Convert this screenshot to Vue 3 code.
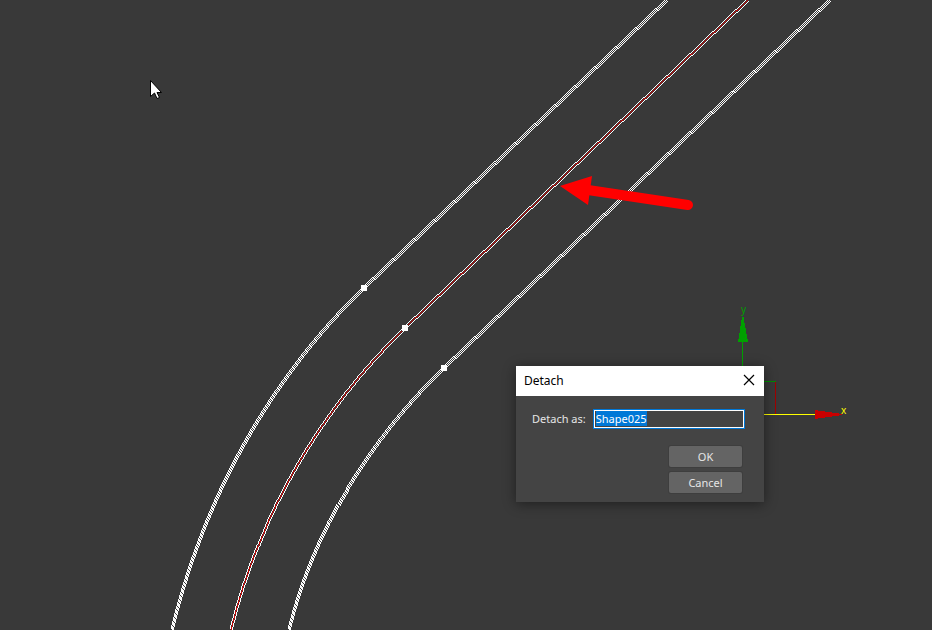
<script setup>
import { onMounted, ref } from 'vue'

const name = ref('Shape025')
const nameInput = ref(null)
const open = ref(true)

const splines = [
  { id: 'left', core: 'white', x: 364, y: 288, d: 'M667 0L364 288C268 380 203 501 172 630' },
  { id: 'center', core: 'red', x: 405, y: 328, d: 'M748 0L405 328C320 410 259 515 231 630' },
  { id: 'right', core: 'white', x: 444, y: 368, d: 'M830 0L444 368C370 439 313 531 289 630' },
]

onMounted(() => {
  nameInput.value.focus()
  nameInput.value.select()
})
</script>

<template>
  <main class="viewport">
    <svg class="scene" aria-hidden="true">
      <g class="splines">
        <g v-for="s in splines" :key="s.id">
          <path :d="s.d" :class="s.core" />
          <path :d="s.d" class="white" transform="translate(-1 -1)" />
          <path :d="s.d" class="white" transform="translate(1 1)" />
          <rect :x="s.x - 3" :y="s.y - 3" width="6" height="6" class="vertex" />
        </g>
      </g>
      <g shape-rendering="crispEdges">
        <path d="M742.5 341V414" stroke="#00a000" />
        <path d="M742 317H743.500L748 342H738Z" fill="#00a000" />
        <path d="M743 381.500H776" stroke="#008c00" />
        <path d="M775.500 382V414" stroke="#a00000" />
        <path d="M742 414.500H816" stroke="#ffff00" />
        <path d="M815 410L842 414V415L815 419Z" fill="#c80000" />
      </g>
      <text x="741" y="313" class="axis" fill="#00a000">y</text>
      <text x="841" y="414" class="axis" fill="#ffff00">x</text>
      <path d="M588 190L688 205" stroke="#ff0000" stroke-width="10" stroke-linecap="round" />
      <path d="M560 186L592 176L588 205Z" fill="#ff0000" />
      <path
        d="M150.500 80.500V96.500L154.500 93L157 98.500L159.500 97.500L157 92.500H161.500Z"
        fill="#fff"
        stroke="#000"
      />
    </svg>

    <form v-if="open" class="dialog" role="dialog" aria-labelledby="title" @submit.prevent="open = false">
      <header class="titlebar">
        <h1 id="title">Detach</h1>
        <button type="button" class="close" aria-label="Close" @click="open = false">
          <svg width="12" height="12" viewBox="0 0 12 12">
            <path d="M1 1L11 11M11 1L1 11" stroke="#000" stroke-width="1.200" />
          </svg>
        </button>
      </header>
      <div class="body">
        <div class="field">
          <label for="shape-name">Detach as:</label>
          <input id="shape-name" ref="nameInput" v-model="name" type="text" spellcheck="false" autocomplete="off" />
        </div>
        <div class="actions">
          <button type="submit">OK</button>
          <button type="button" @click="open = false">Cancel</button>
        </div>
      </div>
    </form>
  </main>
</template>

<style>
body {
  margin: 0;
  background: #393939;
}
</style>

<style scoped>
.viewport {
  position: relative;
  height: 100vh;
  overflow: hidden;
  background: #393939;
  font-family: "Noto Sans", "Open Sans", sans-serif;
  font-size: 11px;
}

.scene {
  display: block;
  width: 100%;
  height: 100%;
}

/* A stroke just under one pixel is drawn as a hairline, so the three strands stay apart. */
.splines {
  fill: none;
  stroke-width: 0.99;
  shape-rendering: crispEdges;
}

.white {
  stroke: #fff;
}

.red {
  stroke: #d00000;
}

.vertex {
  fill: #fff;
}

.axis {
  font-size: 10px;
}

.dialog {
  position: absolute;
  left: 516px;
  top: 366px;
  width: 248px;
  background: #444;
  color: #e6e6e6;
  box-shadow: 0 2px 12px rgba(0, 0, 0, 0.45);
}

.titlebar {
  display: flex;
  align-items: center;
  justify-content: space-between;
  box-sizing: border-box;
  height: 30px;
  padding: 0 8px 2px;
  background: #fff;
  color: #000;
}

h1 {
  margin: 0;
  font-size: 12px;
  font-weight: 400;
}

.close {
  display: flex;
  padding: 1px;
  border: 0;
  background: none;
}

.body {
  padding: 14px 20px 9px 16px;
}

.field {
  display: flex;
  align-items: center;
  gap: 8px;
}

.field label {
  flex: none;
  padding-bottom: 2px;
}

.field input {
  flex: 1;
  min-width: 0;
  box-sizing: border-box;
  height: 18px;
  padding: 0 1px 2px;
  border: 1px solid #fff;
  outline: 1px solid #0078d7;
  background: #444;
  color: #fff;
  font: inherit;
}

.field input::selection {
  background: #0078d7;
  color: #fff;
}

.actions {
  display: flex;
  flex-direction: column;
  align-items: flex-end;
  gap: 5px;
  margin-top: 18px;
  padding-right: 2px;
}

.actions button {
  width: 73px;
  height: 21px;
  padding: 0;
  border: 0;
  border-radius: 2px;
  background: #646464;
  box-shadow: 0 0 0 1px #3e3e3e;
  color: #e6e6e6;
  font: inherit;
}
</style>
